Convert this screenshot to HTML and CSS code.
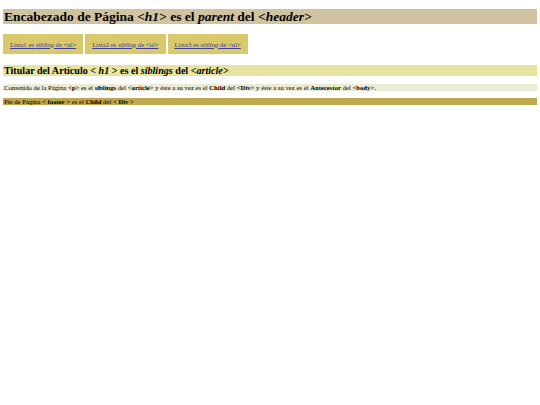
FILE: index.html
```html
<!DOCTYPE html>
<html lang="es">
<head>
<meta charset="utf-8">
<title>Página</title>
<link rel="stylesheet" href="styles.css">
</head>
<body>
<div class="page">
  <header class="site-header">
    <h1 class="site-title">Encabezado de Página <i>&lt;h1&gt;</i> es el <i>parent</i> del <i>&lt;header&gt;</i></h1>
  </header>
  <nav class="nav">
    <ul class="nav-list">
      <li class="nav-item"><a href="#">Lista1 es <i>sibling</i> de &lt;ul&gt;</a></li>
      <li class="nav-item"><a href="#">Lista2 es <i>sibling</i> de &lt;ul&gt;</a></li>
      <li class="nav-item"><a href="#">Lista3 es <i>sibling</i> de &lt;ul&gt;</a></li>
    </ul>
  </nav>
  <article class="article">
    <h1 class="article-title">Titular del Artículo &lt; <i>h1</i> &gt; es el <i>siblings</i> del <i>&lt;article&gt;</i></h1>
    <p class="article-text">Contenido de la Página <b>&lt;p&gt;</b> es el <b>siblings</b> del <b>&lt;article&gt;</b> y éste a su vez es el <b>Child</b> del <b>&lt;Div&gt;</b> y éste a su vez es el <b>Antecestor</b> del <b>&lt;body&gt;</b>.</p>
  </article>
  <footer class="footer">Pie de Página <b>&lt; footer &gt;</b> es el <b>Child</b> del <b>&lt; Div &gt;</b></footer>
</div>
</body>
</html>
```

FILE: styles.css
```css
html, body {
  margin: 0;
  padding: 0;
  background: #ffffff;
}
body {
  font-family: "Liberation Serif", "Times New Roman", "DejaVu Serif", serif;
  color: #000;
}
.page {
  padding: 9px 3px 0 3px;
}
.site-header {
  background: #d2c3a0;
}
.site-title {
  margin: 0;
  font-size: 13.5px;
  line-height: 15px;
  padding-left: 1px;
  font-weight: bold;
}
.nav {
  margin-top: 10px;
}
.nav-list {
  list-style: none;
  margin: 0;
  padding: 0;
  display: flex;
  gap: 2px;
}
.nav-item {
  background: #d9c96b;
  height: 20px;
  display: flex;
  align-items: center;
  padding: 0 7px;
}
.nav-item a {
  color: #3b3b9a;
  font-size: 6.7px;
  text-decoration: underline;
}
.article {
  margin-top: 11px;
}
.article-title {
  margin: 0;
  background: #e6e49e;
  font-size: 10.1px;
  line-height: 11px;
  padding-left: 1px;
}
.article-text {
  margin: 8px 0 0 0;
  background: #ecebd6;
  font-size: 6.7px;
  line-height: 7px;
  padding-left: 1px;
}
.footer {
  margin-top: 7px;
  background: #bfa84b;
  font-size: 6.7px;
  line-height: 7px;
  padding-left: 1px;
}
```
